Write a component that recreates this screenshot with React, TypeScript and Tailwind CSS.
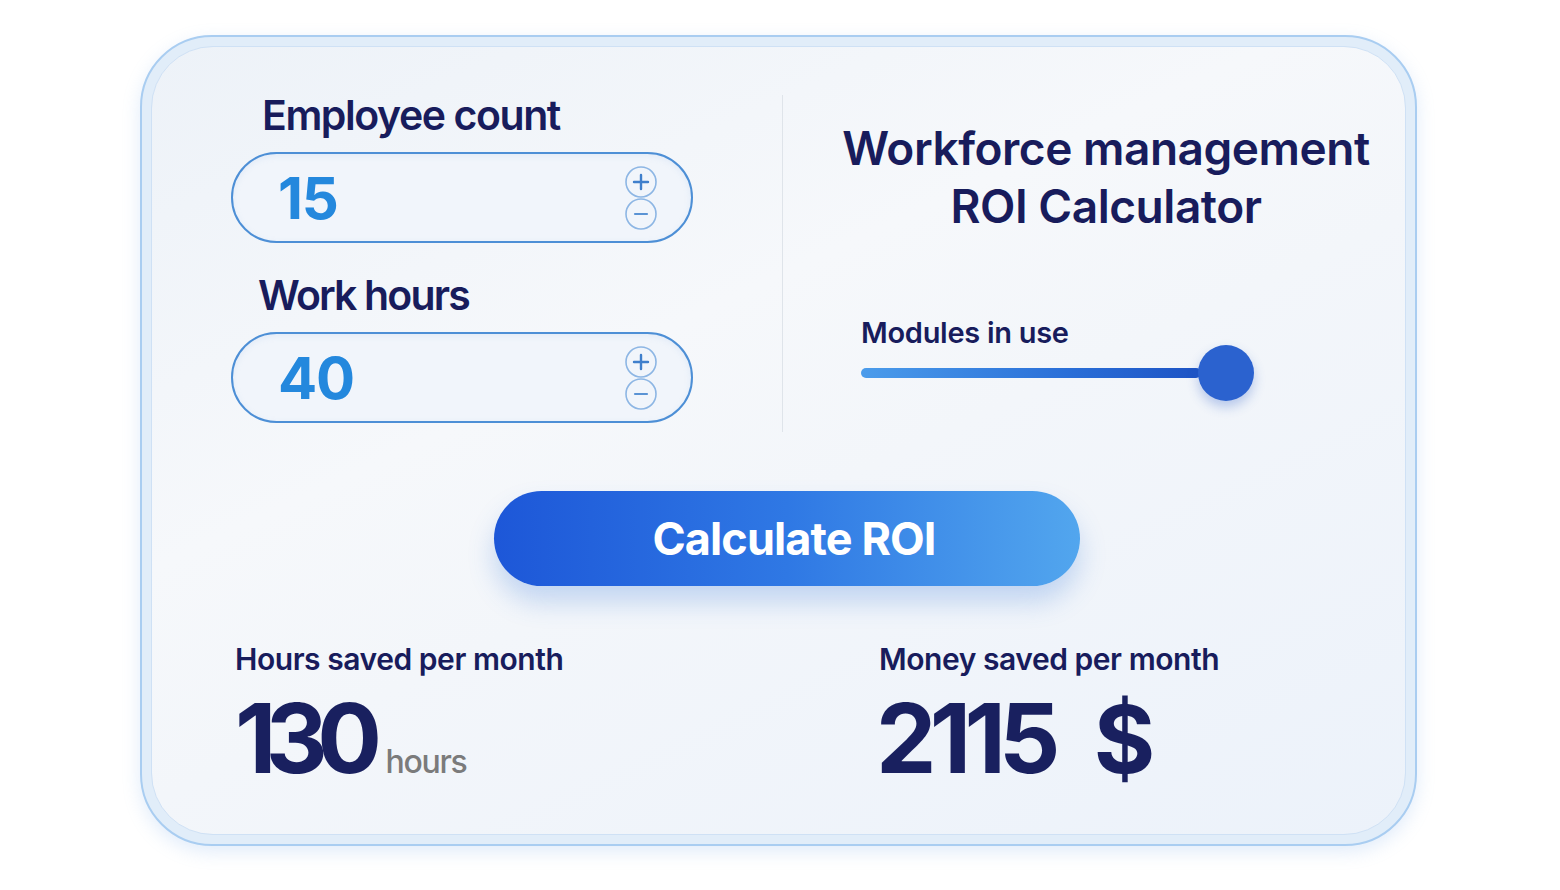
import React from "react";

function StepIcons() {
  return (
    <svg width="34" height="66" viewBox="0 0 34 66" fill="none">
      <circle cx="17" cy="17" r="15" stroke="#8db6e4" strokeWidth="1.6" />
      <path d="M17 10v14M10 17h14" stroke="#3f7fcc" strokeWidth="2.4" strokeLinecap="round" />
      <circle cx="17" cy="49" r="15" stroke="#8db6e4" strokeWidth="1.6" />
      <path d="M11 49h12" stroke="#5a93d4" strokeWidth="2.2" strokeLinecap="round" />
    </svg>
  );
}

function NumberField({ value }: { value: string }) {
  return (
    <div className="flex h-[91px] w-[462px] items-center justify-between rounded-full border-2 border-[#4d8fd6] bg-[#f1f5fb] pl-[45px] pr-[33px] shadow-[inset_0_2px_6px_rgba(140,180,230,0.15)]">
      <span className="text-[58px] font-bold leading-none tracking-[-0.02em] text-[#2488dd]">{value}</span>
      <StepIcons />
    </div>
  );
}

export default function App() {
  return (
    <div className="h-[890px] w-[1560px] bg-white pl-[140px] pt-[35px] font-['Inter','Noto_Sans',sans-serif]">
      <div className="h-[811px] w-[1277px] rounded-[72px] border-2 border-[#a9cdf1] bg-[#e1edf9] p-[9px] shadow-[0_6px_18px_rgba(120,170,230,0.22)]">
        <div className="flex h-full flex-col rounded-[62px] border border-[#cfe1f5] bg-[linear-gradient(155deg,#edf2f8_0%,#f6f8fb_38%,#f3f6fa_55%,#ecf2fa_100%)] pl-[79px] pt-[46px]">
          {/* inputs and title */}
          <div className="flex items-start">
            <div className="flex w-[462px] flex-col">
              <div className="pl-[31px] text-[41px] font-semibold leading-[44px] tracking-[-0.035em] text-[#181c5c]">
                Employee count
              </div>
              <div className="mt-[15px]">
                <NumberField value="15" />
              </div>
              <div className="mt-[30px] pl-[27px] text-[41px] font-semibold leading-[44px] tracking-[-0.045em] text-[#181c5c]">
                Work hours
              </div>
              <div className="mt-[15px]">
                <NumberField value="40" />
              </div>
            </div>

            <div className="ml-[89px] mt-[2px] h-[337px] w-px bg-[#dfe4ea]" />

            <div className="flex flex-1 flex-col">
              <div className="mt-[26px] pl-[24px] text-center text-[46px] font-semibold leading-[58px] tracking-[-0.01em] text-[#181c5c]">
                Workforce management
                <br />
                ROI Calculator
              </div>
              <div className="mt-[81px] pl-[78px] text-[29px] font-semibold leading-[34px] tracking-[-0.01em] text-[#181c5c]">
                Modules in use
              </div>
              <div className="ml-[78px] mt-[-5px] flex h-[56px] items-center">
                <div className="h-[10px] w-[340px] rounded-full bg-[linear-gradient(90deg,#4b9ceb,#2a6fd8_60%,#1d53c4)]" />
                <div className="-ml-[3px] h-[56px] w-[56px] rounded-full bg-[#2b62cf] shadow-[0_6px_12px_rgba(40,90,200,0.3)]" />
              </div>
            </div>
          </div>

          {/* action */}
          <div className="ml-[263px] mt-[59px] flex h-[95px] w-[586px] items-center justify-center rounded-full bg-[linear-gradient(90deg,#1d57d8_0%,#2f78e4_50%,#52a6ee_100%)] pl-[14px] shadow-[0_16px_26px_rgba(70,130,220,0.28)]">
            <span className="text-[45px] font-bold leading-none tracking-[-0.02em] text-white">Calculate ROI</span>
          </div>

          {/* results */}
          <div className="mt-[55px] flex pl-[4px]">
            <div className="flex w-[644px] flex-col">
              <div className="text-[30px] font-semibold leading-[36px] tracking-[-0.015em] text-[#181c5c]">
                Hours saved per month
              </div>
              <div className="mt-[13px] flex items-baseline gap-[14px]">
                <span className="text-[96px] font-bold leading-[96px] tracking-[-0.11em] text-[#19205f]">130</span>
                <span className="text-[32px] font-medium leading-none tracking-[-0.04em] text-[#7b7b7b]">hours</span>
              </div>
            </div>
            <div className="flex flex-col">
              <div className="text-[30px] font-semibold leading-[36px] tracking-[-0.015em] text-[#181c5c]">
                Money saved per month
              </div>
              <div className="mt-[13px] flex items-baseline gap-[40px]">
                <span className="-ml-[3px] text-[96px] font-bold leading-[96px] tracking-[-0.07em] text-[#19205f]">2115</span>
                <span className="text-[94px] font-bold leading-[96px] text-[#19205f]">$</span>
              </div>
            </div>
          </div>
        </div>
      </div>
    </div>
  );
}
